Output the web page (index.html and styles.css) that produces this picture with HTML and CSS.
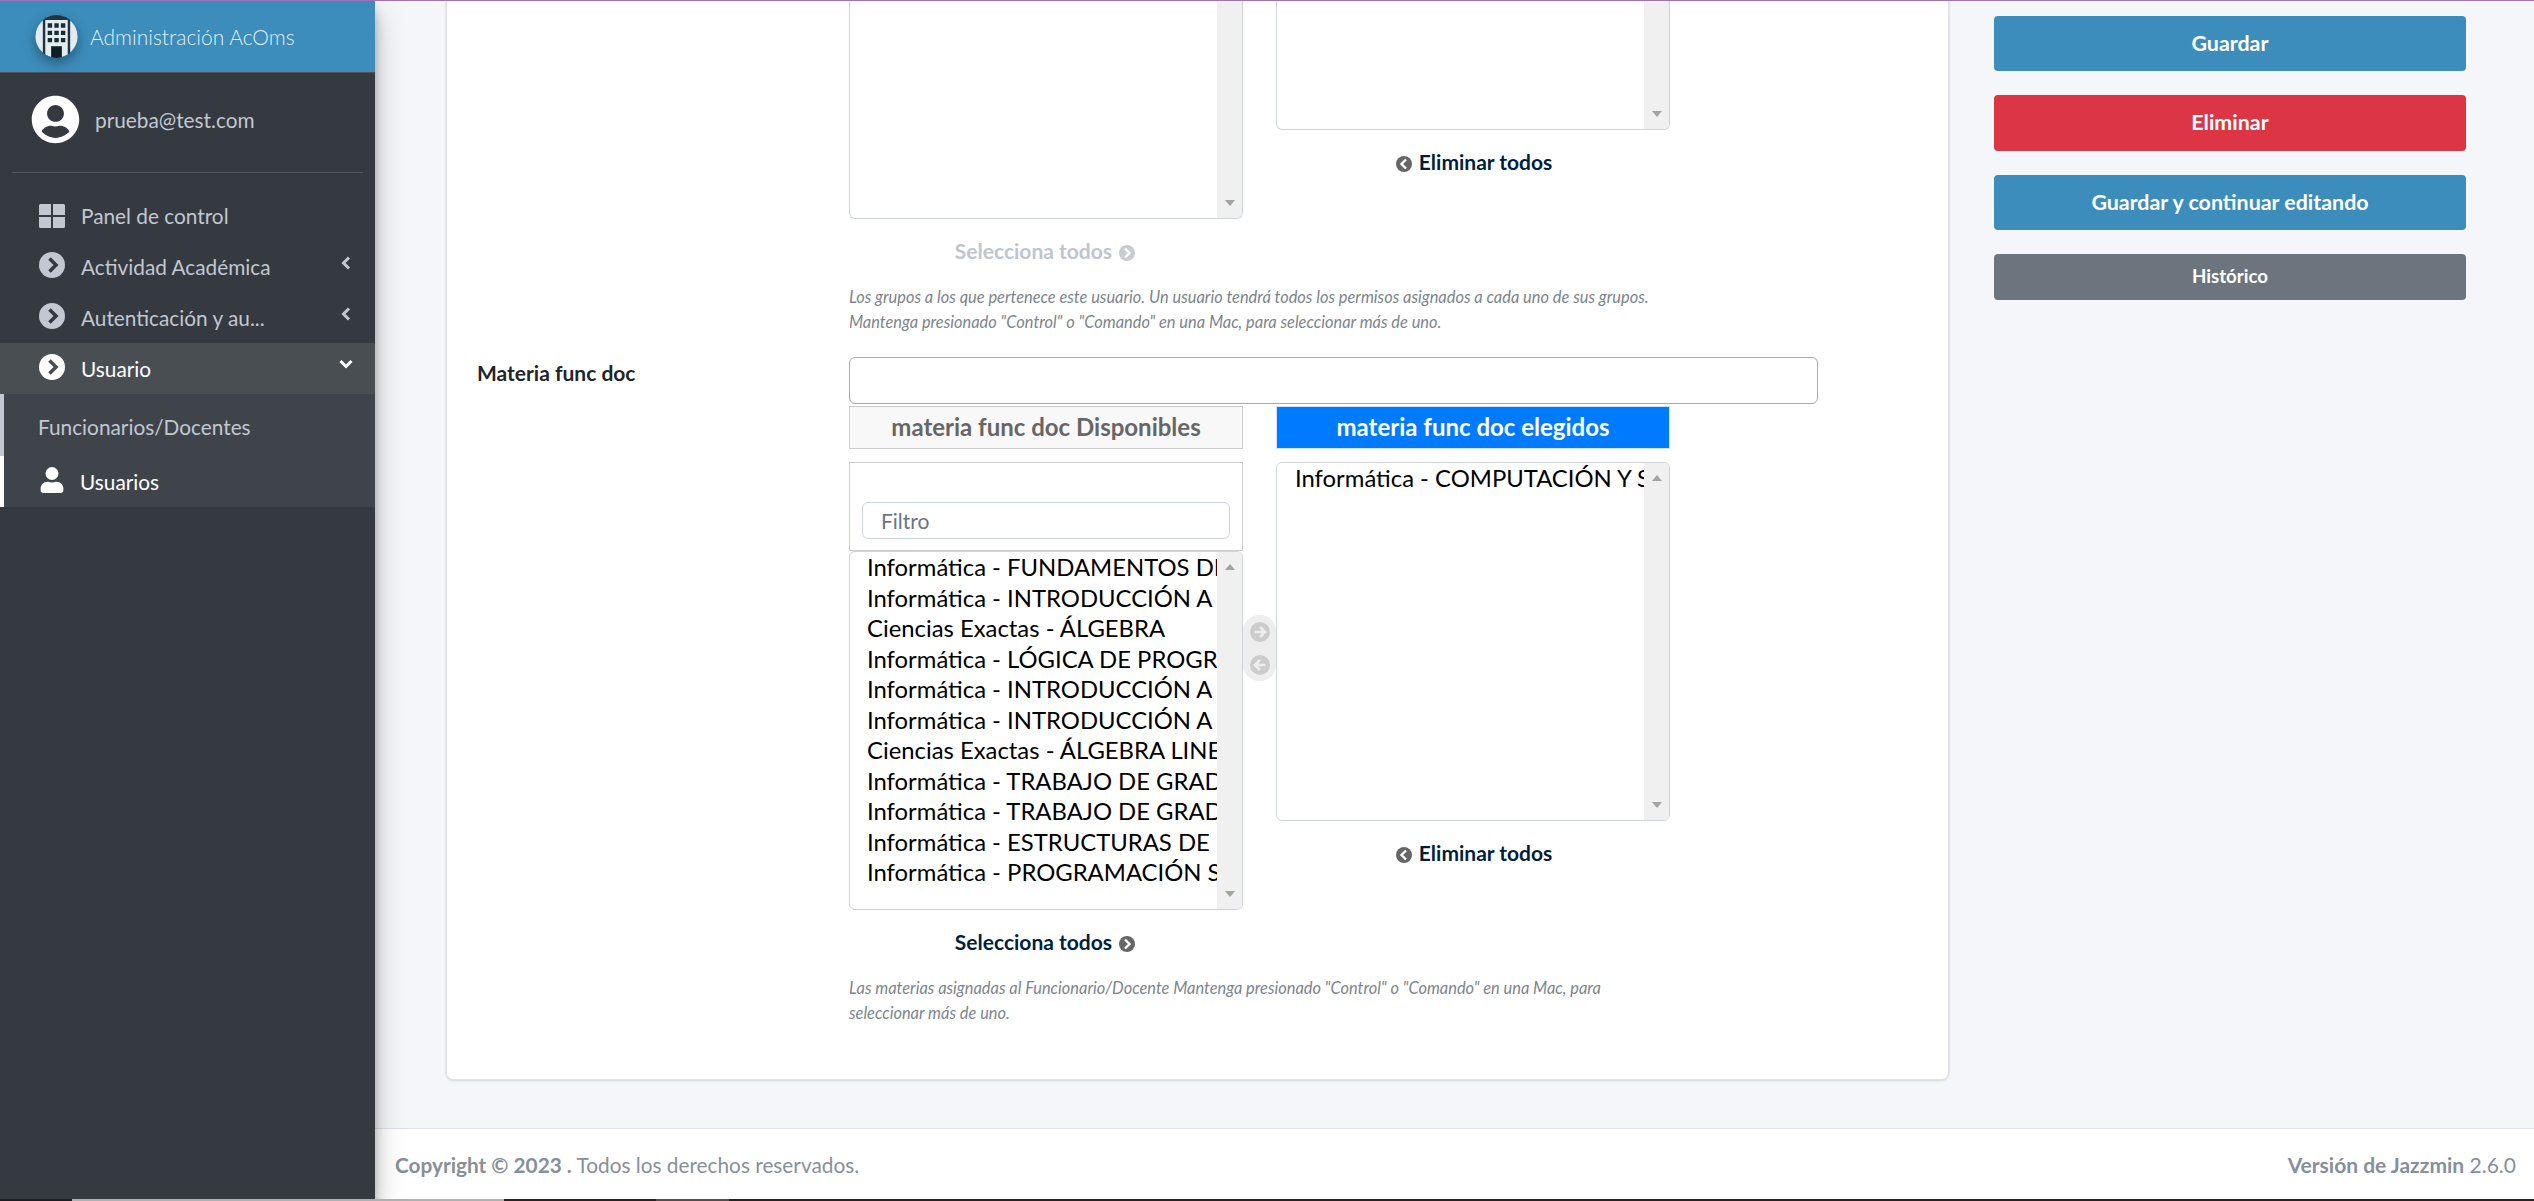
FILE: index.html
```html
<!DOCTYPE html>
<html lang="es">
<head>
<meta charset="utf-8">
<title>Usuario</title>
<link rel="stylesheet" href="styles.css">
</head>
<body>
<div class="top-line"></div>
<div class="wrapper">
  <aside class="sidebar">
    <div class="brand">
      <svg class="brand-logo" viewBox="0 0 44 44">
        <circle cx="22" cy="22" r="21.500" fill="#e3ecf1"/>
        <path d="M8 3.500 11 2h22l3 1.500V40h-2.500V5h-23v35H8z" fill="#22343f"/>
        <path d="M11 2.500A22 22 0 0 1 33 2.500V5H11z" fill="#22343f"/>
        <path d="M13 8.500h4.500V13H13zM19.800 8.500h4.500V13h-4.500zM26.500 8.500H31V13h-4.500zM13 16h4.500v4.500H13zM19.800 16h4.500v4.500h-4.500zM26.500 16H31v4.500h-4.500zM13 23.500h4.500V28H13zM19.800 23.500h4.500V28h-4.500zM26.500 23.500H31V28h-4.500z" fill="#1a2b36"/>
        <path d="M16.500 32h11v11.500a22 22 0 0 1-11 0z" fill="#0f1d26"/>
      </svg>
      <span class="brand-text">Administración AcOms</span>
    </div>
    <div class="user-panel">
      <svg class="avatar" viewBox="0 0 512 512"><path fill="#fff" d="M256 8C119 8 8 119 8 256s111 248 248 248 248-111 248-248S393 8 256 8zm0 96c48.600 0 88 39.400 88 88s-39.400 88-88 88-88-39.400-88-88 39.400-88 88-88zm0 344c-58.700 0-111.300-26.600-146.500-68.200 18.800-35.400 55.600-59.800 98.500-59.800 2.400 0 4.800.4 7.100 1.100 13 4.200 26.600 6.900 40.900 6.900 14.300 0 28-2.700 40.900-6.900 2.300-.7 4.700-1.100 7.100-1.100 42.900 0 79.700 24.400 98.500 59.800C367.300 421.400 314.700 448 256 448z"/></svg>
      <span class="user-name">prueba@test.com</span>
    </div>
    <nav class="nav">
      <a class="nav-item">
        <svg class="nav-icon nav-icon-grid" viewBox="0 0 26 24"><path fill="#c2c7d0" d="M0 1.500A1.500 1.500 0 0 1 1.500 0H12v11H0zM14 0h10.500A1.500 1.500 0 0 1 26 1.500V11H14zM0 13h12v11H1.500A1.500 1.500 0 0 1 0 22.500zM14 13h12v9.500a1.500 1.500 0 0 1-1.500 1.500H14z"/></svg>
        <span class="nav-label">Panel de control</span>
      </a>
      <a class="nav-item">
        <svg class="nav-icon" viewBox="0 0 26 26"><circle cx="13" cy="13" r="13" fill="#c2c7d0"/><path d="M10.500 6.500 17 13l-6.500 6.500" fill="none" stroke="#343a40" stroke-width="3.600"/></svg>
        <span class="nav-label">Actividad Académica</span>
        <svg class="caret" viewBox="0 0 10 14"><path d="M8 1.500 2.500 7 8 12.500" fill="none" stroke="#c2c7d0" stroke-width="3"/></svg>
      </a>
      <a class="nav-item">
        <svg class="nav-icon" viewBox="0 0 26 26"><circle cx="13" cy="13" r="13" fill="#c2c7d0"/><path d="M10.500 6.500 17 13l-6.500 6.500" fill="none" stroke="#343a40" stroke-width="3.600"/></svg>
        <span class="nav-label">Autenticación y au...</span>
        <svg class="caret" viewBox="0 0 10 14"><path d="M8 1.500 2.500 7 8 12.500" fill="none" stroke="#c2c7d0" stroke-width="3"/></svg>
      </a>
      <a class="nav-item nav-open">
        <svg class="nav-icon" viewBox="0 0 26 26"><circle cx="13" cy="13" r="13" fill="#fff"/><path d="M10.500 6.500 17 13l-6.500 6.500" fill="none" stroke="#494e53" stroke-width="3.600"/></svg>
        <span class="nav-label">Usuario</span>
        <svg class="caret caret-down" viewBox="0 0 14 10"><path d="M1.500 2 7 7.500 12.500 2" fill="none" stroke="#fff" stroke-width="3"/></svg>
      </a>
      <div class="subnav">
        <a class="sub-item">Funcionarios/Docentes</a>
        <a class="sub-item sub-active">
          <svg class="sub-icon" viewBox="0 0 448 512"><path fill="#fff" d="M224 256a128 128 0 1 0 0-256 128 128 0 0 0 0 256zm89.600 32h-16.700c-22.200 10.200-46.900 16-72.900 16s-50.600-5.800-72.900-16h-16.700C60.200 288 0 348.200 0 422.400V464c0 26.500 21.500 48 48 48h352c26.500 0 48-21.500 48-48v-41.600c0-74.200-60.200-134.400-134.400-134.400z"/></svg>
          <span>Usuarios</span>
        </a>
      </div>
    </nav>
  </aside>

  <div class="main">
    <div class="content">
      <section class="card">
        <div class="field-row field-top">
          <div class="field-label"></div>
          <div class="field-body">
            <div class="chooser chooser-top">
              <div class="col">
                <div class="list list-top-a">
                  <div class="list-items"></div>
                  <div class="bar bar-down-only"><i class="tri-down"></i></div>
                </div>
                <a class="all all-disabled">Selecciona todos
                  <svg class="mini" viewBox="0 0 16 16"><circle cx="8" cy="8" r="8" fill="#c9cbcf"/><path d="M6 3.500 10.500 8 6 12.500" fill="none" stroke="#fff" stroke-width="2.400"/></svg>
                </a>
              </div>
              <div class="gap"></div>
              <div class="col">
                <div class="list list-top-b">
                  <div class="list-items"></div>
                  <div class="bar bar-down-only"><i class="tri-down"></i></div>
                </div>
                <a class="all">
                  <svg class="mini" viewBox="0 0 16 16"><circle cx="8" cy="8" r="8" fill="#666"/><path d="M10 3.500 5.500 8l4.500 4.500" fill="none" stroke="#fff" stroke-width="2.400"/></svg>
                  Eliminar todos</a>
              </div>
            </div>
            <p class="help">Los grupos a los que pertenece este usuario. Un usuario tendrá todos los permisos asignados a cada uno de sus grupos.<br>Mantenga presionado "Control" o "Comando" en una Mac, para seleccionar más de uno.</p>
          </div>
        </div>

        <div class="field-row">
          <label class="field-label">Materia func doc</label>
          <div class="field-body">
            <input class="text-input" type="text">
            <div class="chooser">
              <div class="col">
                <div class="head head-left">materia func doc Disponibles</div>
                <div class="filter-box">
                  <input class="filter-input" type="text" placeholder="Filtro">
                </div>
                <div class="list list-left">
                  <div class="list-items">
                    <div class="opt">Informática - FUNDAMENTOS DE PROGRAMACIÓN</div>
                    <div class="opt">Informática - INTRODUCCIÓN A LA INFORMÁTICA</div>
                    <div class="opt">Ciencias Exactas - ÁLGEBRA</div>
                    <div class="opt">Informática - LÓGICA DE PROGRAMACIÓN</div>
                    <div class="opt">Informática - INTRODUCCIÓN A LA PROGRAMACIÓN</div>
                    <div class="opt">Informática - INTRODUCCIÓN A REDES</div>
                    <div class="opt">Ciencias Exactas - ÁLGEBRA LINEAL</div>
                    <div class="opt">Informática - TRABAJO DE GRADO I</div>
                    <div class="opt">Informática - TRABAJO DE GRADO II</div>
                    <div class="opt">Informática - ESTRUCTURAS DE DATOS</div>
                    <div class="opt">Informática - PROGRAMACIÓN SEGURA</div>
                  </div>
                  <div class="bar"><i class="tri-up"></i><i class="tri-down"></i></div>
                </div>
                <a class="all">Selecciona todos
                  <svg class="mini" viewBox="0 0 16 16"><circle cx="8" cy="8" r="8" fill="#666"/><path d="M6 3.500 10.500 8 6 12.500" fill="none" stroke="#fff" stroke-width="2.400"/></svg>
                </a>
              </div>
              <div class="gap">
                <div class="mover">
                  <svg class="mover-icon" viewBox="0 0 20 20"><circle cx="10" cy="10" r="10" fill="#ccc"/><path d="M4.500 10h10M10 5l5 5-5 5" fill="none" stroke="#eee" stroke-width="2.600"/></svg>
                  <svg class="mover-icon" viewBox="0 0 20 20"><circle cx="10" cy="10" r="10" fill="#ccc"/><path d="M15.500 10h-10M10 5l-5 5 5 5" fill="none" stroke="#eee" stroke-width="2.600"/></svg>
                </div>
              </div>
              <div class="col">
                <div class="head head-right">materia func doc elegidos</div>
                <div class="list list-right">
                  <div class="list-items">
                    <div class="opt">Informática - COMPUTACIÓN Y SISTEMAS</div>
                  </div>
                  <div class="bar"><i class="tri-up"></i><i class="tri-down"></i></div>
                </div>
                <a class="all">
                  <svg class="mini" viewBox="0 0 16 16"><circle cx="8" cy="8" r="8" fill="#666"/><path d="M10 3.500 5.500 8l4.500 4.500" fill="none" stroke="#fff" stroke-width="2.400"/></svg>
                  Eliminar todos</a>
              </div>
            </div>
            <p class="help">Las materias asignadas al Funcionario/Docente Mantenga presionado "Control" o "Comando" en una Mac, para seleccionar más de uno.</p>
          </div>
        </div>
      </section>

      <aside class="actions">
        <a class="btn btn-blue">Guardar</a>
        <a class="btn btn-red">Eliminar</a>
        <a class="btn btn-blue">Guardar y continuar editando</a>
        <a class="btn btn-grey">Histórico</a>
      </aside>
    </div>

    <footer class="footer">
      <span class="foot-left"><b>Copyright © 2023 .</b> Todos los derechos reservados.</span>
      <span class="foot-right"><b>Versión de Jazzmin</b> 2.6.0</span>
    </footer>
  </div>
</div>
<div class="task-strip">
  <span class="seg seg-a"></span><span class="seg seg-b"></span><span class="seg seg-c"></span><span class="seg seg-d"></span><span class="seg seg-e"></span>
</div>
</body>
</html>
```
FILE: styles.css
```css
* { box-sizing: border-box; }
html, body { margin: 0; height: 100%; overflow: hidden; }
body {
  display: grid;
  grid-template-rows: 1px 1fr 2px;
  font-family: Lato, "Noto Sans", sans-serif;
  font-size: 20.800px;
  color: #212529;
  background: #f4f6f9;
}
.top-line { background: #9b72c2; position: relative; z-index: 5; }
.wrapper { display: flex; min-height: 0; }

/* Sidebar */
.sidebar {
  width: 375px;
  flex: none;
  background: #343a40;
  box-shadow: 0 14px 28px rgba(0,0,0,.25), 0 10px 10px rgba(0,0,0,.22);
  position: relative;
  z-index: 2;
}
.brand {
  height: 72px;
  background: #3c8dbc;
  border-bottom: 1px solid #4b545c;
  display: flex;
  align-items: center;
  padding-left: 35px;
  gap: 12px;
}
.brand-logo { width: 43px; height: 43px; border-radius: 50%; box-shadow: 0 5px 12px rgba(0,0,0,.35); }
.brand-text { color: rgba(255,255,255,.88); font-size: 21px; font-weight: 300; }
.user-panel {
  margin: 0 12px;
  height: 100px;
  border-bottom: 1px solid #4f5962;
  display: flex;
  align-items: center;
  padding: 0 0 6px 19px;
  gap: 15px;
}
.avatar { width: 49px; height: 49px; }
.user-name { color: #c2c7d0; }
.nav { padding-top: 17px; }
.nav-item {
  height: 51px;
  display: flex;
  align-items: center;
  position: relative;
  padding-left: 39px;
  color: #c2c7d0;
}
.nav-icon { width: 26px; height: 26px; margin-right: 16px; flex: none; position: relative; top: -1.500px; }
.nav-icon-grid { top: 0; }
.nav-open { background: #494e53; color: #fff; }
.caret { position: absolute; right: 24px; top: 15px; width: 10px; height: 14px; }
.caret-down { width: 14px; height: 10px; right: 22px; top: 16px; }
.subnav { background: #3f444b; }
.sub-item {
  display: flex;
  align-items: center;
  border-left: 4px solid #c2c7d0;
  padding: 2px 0 0 34px;
  height: 62px;
  color: #c2c7d0;
}
.sub-active {
  border-left-color: #fff;
  color: #fff;
  height: 51px;
  padding: 0 0 0 36px;
}
.sub-icon { width: 24px; height: 26px; margin-right: 16px; position: relative; top: -2px; }

/* Main */
.main { flex: 1; min-width: 0; display: flex; flex-direction: column; }
.content { flex: 1; min-height: 0; display: flex; padding-left: 72px; }
.card {
  width: 1501px;
  flex: none;
  height: 1088px;
  margin-top: -10px;
  background: #fff;
  border-radius: 0 0 6px 6px;
  box-shadow: 0 0 0 1.500px #e0e0e5, 0 1px 3px rgba(0,0,0,.25);
  padding-top: 10px;
}
.field-row { display: flex; }
.field-label {
  width: 402px;
  flex: none;
  padding: 3px 0 0 30px;
  font-weight: 700;
  font-size: 21px;
  line-height: 26px;
}
.field-body { width: 969px; }
.field-top { height: 356px; }
.text-input {
  display: block;
  width: 969px;
  height: 47px;
  border: 1px solid #a9a9a9;
  border-radius: 6px;
  background: #fff;
  margin-bottom: 2px;
}
.chooser { display: flex; }
.col { width: 394px; flex: none; }
.gap { width: 33px; flex: none; padding-top: 209px; }
.head {
  height: 43px;
  line-height: 40px;
  text-align: center;
  font-weight: 700;
  font-size: 24px;
  margin-bottom: 13px;
}
.head-left { background: #f8f8f8; color: #666; border: 1px solid #ccc; }
.head-right { background: #007bff; color: #fff; border: 1px solid #cfe2ff; }
.filter-box {
  height: 89px;
  border: 1px solid #ccc;
  padding: 39px 12px 0;
}
.filter-input {
  display: block;
  width: 100%;
  height: 37px;
  border: 1px solid #ced4da;
  border-radius: 6px;
  padding: 0 18px;
  font: 21px Lato, sans-serif;
  color: #495057;
}
.filter-input::placeholder { color: #6c757d; opacity: 1; }
.list {
  display: flex;
  border: 1px solid #ced4da;
  border-radius: 6px;
  background: #fff;
  overflow: hidden;
}
.list-top-a { height: 218px; border-top: 0; border-top-left-radius: 0; border-top-right-radius: 0; }
.list-top-b { height: 129px; border-top: 0; border-top-left-radius: 0; border-top-right-radius: 0; }
.list-left { height: 359px; }
.list-right { height: 359px; }
.list-items {
  flex: 1;
  min-width: 0;
  overflow: hidden;
  padding: 0 0 0 17px;
  font-size: 23.850px;
  color: #000;
}
.list-right .list-items { padding-left: 18px; }
.opt { height: 30.500px; line-height: 30.500px; white-space: nowrap; }
.bar {
  width: 25px;
  flex: none;
  background: #f0f0f0;
  display: flex;
  flex-direction: column;
  justify-content: space-between;
  align-items: center;
  padding: 12px 0;
}
.bar-down-only { justify-content: flex-end; }
.tri-up { width: 0; height: 0; border: 5px solid transparent; border-top: 0; border-bottom: 6px solid #a3a3a3; }
.tri-down { width: 0; height: 0; border: 5px solid transparent; border-bottom: 0; border-top: 6px solid #a3a3a3; }
.all {
  display: block;
  height: 53px;
  padding-top: 18px;
  line-height: 28px;
  text-align: center;
  font-weight: 700;
  font-size: 21px;
  color: #001f3f;
}
.all-disabled { color: #bfc5cd; }
.mini { width: 16px; height: 16px; vertical-align: -2px; margin: 0 2px; }
.mover {
  width: 33px;
  height: 66px;
  background: #eee;
  border-radius: 16px;
  display: flex;
  flex-direction: column;
  align-items: center;
  justify-content: space-around;
}
.mover-icon { width: 20px; height: 20px; }
.help {
  margin: 12px 0 0;
  font-style: italic;
  font-size: 16.400px;
  line-height: 25px;
  color: #7c858d;
  width: 800px;
}

/* Actions */
.actions { margin-left: 46px; width: 472px; flex: none; padding-top: 15px; }
.btn {
  display: block;
  height: 55px;
  line-height: 54px;
  text-align: center;
  color: #fff;
  font-weight: 700;
  font-size: 21.400px;
  border-radius: 4px;
  margin-bottom: 24px;
}
.btn-blue { background: #3c8dbc; }
.btn-red { background: #dc3545; height: 56px; }
.btn-grey { background: #6c757d; height: 46px; line-height: 44px; font-size: 18.700px; }

/* Footer */
.footer {
  height: 71px;
  flex: none;
  background: #fff;
  border-top: 1px solid #dee2e6;
  display: flex;
  justify-content: space-between;
  align-items: center;
  padding: 0 18px 0 20px;
  color: #869099;
}
.foot-right { font-size: 21px; }

/* Bottom strip */
.task-strip { display: flex; position: relative; z-index: 5; background: #2e2020; }
.seg { display: block; height: 2px; }
.seg-a { width: 72px; background: #231a1a; }
.seg-b { width: 432px; background: #b0b0b0; }
.seg-c { width: 152px; }
.seg-d { width: 73px; background: #5a4a4a; }
.seg-e { flex: 1; }
```
